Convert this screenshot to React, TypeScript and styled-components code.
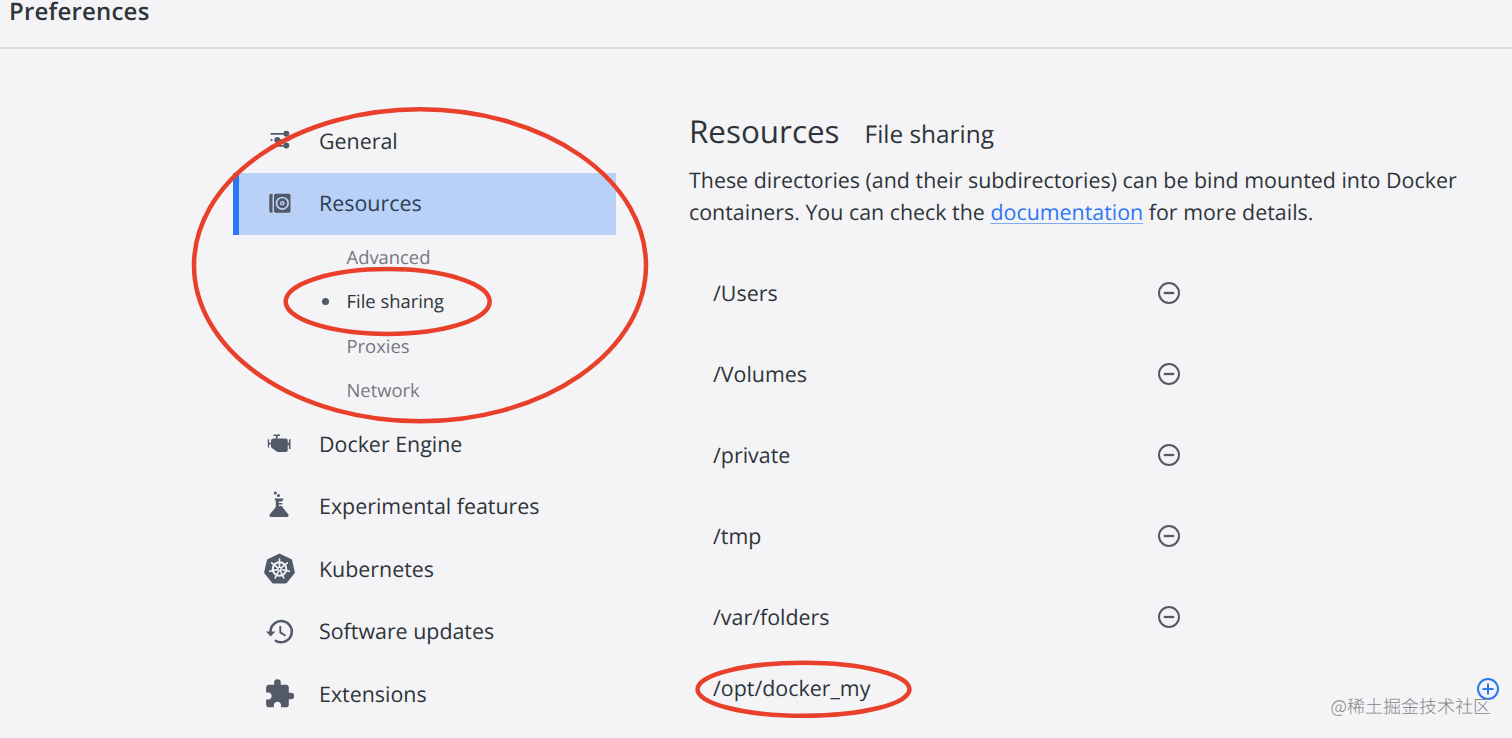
import React from 'react';
import styled, { createGlobalStyle } from 'styled-components';

const INK = '#2e3439';
const ICON = '#525969';
const BLUE = '#2c77f5';

const GlobalStyle = createGlobalStyle`
  * { box-sizing: border-box; }
  body {
    margin: 0;
    background: #f4f4f7;
    color: ${INK};
    font-family: 'Open Sans', 'Noto Sans CJK SC', sans-serif;
    text-rendering: geometricPrecision;
    overflow: hidden;
  }
`;

const Window = styled.div`
  position: relative;
  display: flex;
  flex-direction: column;
  width: 1512px;
  height: 738px;
  overflow: hidden;
`;

const Header = styled.header`
  flex: none;
  height: 49px;
  border-bottom: 2px solid #dddee1;
`;

const Title = styled.h1`
  margin: 0;
  padding-left: 9px;
  font-size: 24px;
  line-height: 23px;
  font-weight: 600;
  letter-spacing: 0.2px;
`;

const Body = styled.main`
  flex: 1;
  display: flex;
  padding: 61px 0 0 233px;
`;

const Nav = styled.nav`
  flex: none;
  width: 382.5px;
`;

const NavItem = styled.div<{ $active?: boolean }>`
  display: flex;
  align-items: center;
  height: 62.5px;
  padding-left: ${(p) => (p.$active ? 25 : 31)}px;
  border-left: ${(p) => (p.$active ? `6px solid ${BLUE}` : 'none')};
  background: ${(p) => (p.$active ? '#b9d0f7' : 'transparent')};
  color: ${(p) => (p.$active ? '#2b3f55' : INK)};
`;

const NavIcon = styled.svg`
  flex: none;
  width: 32px;
  height: 32px;
  margin-right: 23px;
  color: ${ICON};
`;

const Label = styled.span`
  margin-top: 0.6px;
  font-size: 21.4px;
  line-height: 32px;
  white-space: nowrap;
`;

const SubList = styled.ul`
  margin: 0;
  padding: 0;
  list-style: none;
`;

const SubItem = styled.li<{ $active?: boolean }>`
  display: flex;
  align-items: center;
  height: 44.5px;
  padding-left: 89px;
  font-size: 18.4px;
  color: ${(p) => (p.$active ? INK : '#74787e')};
`;

const Dot = styled.i<{ $visible?: boolean }>`
  width: 7px;
  height: 7px;
  margin-right: 17.5px;
  border-radius: 50%;
  background: ${(p) => (p.$visible ? ICON : 'transparent')};
`;

const Content = styled.section`
  flex: 1;
  padding-left: 73.5px;
`;

const Heading = styled.h2`
  display: flex;
  align-items: baseline;
  gap: 25px;
  height: 44px;
  margin: 0;
  font-size: 31.4px;
  line-height: 43px;
  font-weight: 400;
`;

const SubHeading = styled.span`
  font-size: 24.4px;
`;

const Description = styled.p`
  margin: 11px 0 0;
  font-size: 21.4px;
  line-height: 32px;
  white-space: nowrap;
`;

const DocLink = styled.a`
  color: ${BLUE};
  text-decoration: underline 1px #7fabf5;
  text-decoration-skip-ink: none;
  text-underline-offset: 3px;
`;

const Directories = styled.div`
  padding: 24px 0 0 24px;
`;

const Directory = styled.div`
  display: flex;
  align-items: center;
  justify-content: space-between;
  width: 467.5px;
  height: 81.1px;
`;

const NewDirectory = styled.div`
  display: flex;
  align-items: center;
  justify-content: space-between;
  width: 787px;
  height: 62px;
`;

const Path = styled.span`
  font-size: 21.4px;
  line-height: 32px;
`;

const RoundButton = styled.svg<{ $primary?: boolean }>`
  width: 24px;
  height: 24px;
  color: ${(p) => (p.$primary ? BLUE : ICON)};
`;

const Marks = styled.svg`
  position: absolute;
  inset: 0;
  width: 1512px;
  height: 738px;
  pointer-events: none;
`;

const Watermark = styled.span`
  position: absolute;
  right: 21px;
  bottom: 19px;
  font-family: 'Noto Sans CJK SC', sans-serif;
  font-size: 18px;
  font-weight: 300;
  line-height: 26px;
  color: #858587;
  white-space: nowrap;
`;

const GeneralIcon = () => (
  <NavIcon viewBox="0 0 32 32" fill="currentColor">
    <path d="M6.500 8h13v1.800h-13zM6.500 14.200h2v1.800h-2zM11 14.200h15v1.800h-15zM6.500 20h13v1.800h-13z" />
    <circle cx="22.300" cy="8.700" r="3" />
    <circle cx="13.300" cy="15" r="3" />
    <circle cx="22.300" cy="20.600" r="3" />
  </NavIcon>
);

const ResourcesIcon = () => (
  <NavIcon viewBox="0 0 32 32" fill="currentColor">
    <path d="M7.300 5.800h1.200v19H7.300a2 2 0 0 1-2-2v-15a2 2 0 0 1 2-2z" />
    <rect x="10" y="5.800" width="16.500" height="19" rx="1.800" />
    <circle cx="18.300" cy="15.300" r="5.800" fill="none" stroke="#b9d0f7" strokeWidth="1.700" />
    <circle cx="18.300" cy="15.300" r="2.300" fill="#b9d0f7" />
    <circle cx="18.300" cy="15.300" r="0.900" />
  </NavIcon>
);

const EngineIcon = () => (
  <NavIcon viewBox="0 0 32 32" fill="currentColor">
    <path d="M9.500 6.400h6.500v1.500h-2.400v2.500h8.300a1.800 1.800 0 0 1 1.800 1.800v2.500h1.200v-3.400h1.600v9.600h-1.600v-3.700h-1.200v5.100a1.800 1.800 0 0 1-1.800 1.800h-6.200c-1.600 0-3-.5-4.400-1.600L7.800 20c-.6-.4-.8-1-.8-1.800v-1.700H5.200v3H3.800V11.300h1.400v3.500H7v-2a2.400 2.400 0 0 1 2.400-2.400h2.500V7.900H9.500z" />
  </NavIcon>
);

const FlaskIcon = () => (
  <NavIcon viewBox="0 0 32 32" fill="currentColor">
    <circle cx="11.300" cy="1.900" r="1.500" />
    <circle cx="14.500" cy="4.600" r="1.500" />
    <path d="M10.800 7.600h8.500v1.700h-1v1.200h-3.500V12h3.500v1.500h-3.500V15h3.500v1l5.900 7.200c1 1.400.2 2.800-1.300 2.800H7.200c-1.500 0-2.300-1.400-1.300-2.800l5.900-7.200V9.300h-1z" />
  </NavIcon>
);

const spokes = Array.from({ length: 7 }, (_, i) => (i * 360) / 7);

const KubernetesIcon = () => (
  <NavIcon viewBox="0 0 32 32" fill="currentColor">
    <path
      d="M15.500 1.800 26.900 7.300 29.700 19.500 21.800 29.300H9.200L1.300 19.500 4.100 7.300z"
      stroke="currentColor"
      strokeWidth="2.400"
      strokeLinejoin="round"
    />
    <g fill="none" stroke="#f4f4f7" strokeLinecap="round">
      <circle cx="15.500" cy="16" r="6.800" strokeWidth="2" />
      {spokes.map((a) => (
        <path key={a} d="M15.500 14V6" strokeWidth="1.600" transform={`rotate(${a} 15.500 16)`} />
      ))}
    </g>
    <circle cx="15.500" cy="16" r="2.300" fill="#f4f4f7" />
    <circle cx="15.500" cy="16" r="0.900" />
  </NavIcon>
);

const HistoryIcon = () => (
  <NavIcon viewBox="0 0 32 32" fill="none" stroke="currentColor" strokeWidth="2.500">
    <path d="M6.600 16.200A10.600 10.600 0 1 1 10.900 24.200" />
    <path d="M2 15.500h9.400L6.700 20.500z" fill="currentColor" stroke="none" />
    <path d="M16.300 10v6.400l5.300 3.300" strokeWidth="1.900" />
  </NavIcon>
);

const PuzzleIcon = () => (
  <NavIcon viewBox="0.400 0 24 24" fill="currentColor">
    <path d="M20.500 11H19V7c0-1.100-.9-2-2-2h-4V3.500a2.500 2.500 0 0 0-5 0V5H4c-1.100 0-2 .9-2 2v3.800h1.500c1.500 0 2.700 1.200 2.700 2.700s-1.200 2.700-2.700 2.700H2V20c0 1.100.9 2 2 2h3.800v-1.500c0-1.500 1.200-2.700 2.700-2.700s2.700 1.200 2.700 2.700V22H17c1.100 0 2-.9 2-2v-4h1.500a2.500 2.500 0 0 0 0-5z" />
  </NavIcon>
);

const RemoveButton = () => (
  <RoundButton viewBox="0 1 24 24" fill="none" stroke="currentColor" strokeWidth="2">
    <circle cx="12" cy="12" r="10" />
    <path d="M6.800 12h10.400" strokeWidth="2.300" />
  </RoundButton>
);

const AddButton = () => (
  <RoundButton $primary viewBox="0 0 24 24" fill="none" stroke="currentColor" strokeWidth="2">
    <circle cx="12" cy="12" r="10" />
    <path d="M6.500 12h11M12 6.500v11" />
  </RoundButton>
);

const subItems = ['Advanced', 'File sharing', 'Proxies', 'Network'];
const directories = ['/Users', '/Volumes', '/private', '/tmp', '/var/folders'];

export default function App() {
  return (
    <Window>
      <GlobalStyle />
      <Header>
        <Title>Preferences</Title>
      </Header>
      <Body>
        <Nav>
          <NavItem><GeneralIcon /><Label>General</Label></NavItem>
          <NavItem $active><ResourcesIcon /><Label>Resources</Label></NavItem>
          <SubList>
            {subItems.map((name) => (
              <SubItem key={name} $active={name === 'File sharing'}>
                <Dot $visible={name === 'File sharing'} />
                {name}
              </SubItem>
            ))}
          </SubList>
          <NavItem><EngineIcon /><Label>Docker Engine</Label></NavItem>
          <NavItem><FlaskIcon /><Label>Experimental features</Label></NavItem>
          <NavItem><KubernetesIcon /><Label>Kubernetes</Label></NavItem>
          <NavItem><HistoryIcon /><Label>Software updates</Label></NavItem>
          <NavItem><PuzzleIcon /><Label>Extensions</Label></NavItem>
        </Nav>
        <Content>
          <Heading>Resources<SubHeading>File sharing</SubHeading></Heading>
          <Description>
            These directories (and their subdirectories) can be bind mounted into Docker
            <br />
            containers. You can check the <DocLink>documentation</DocLink> for more details.
          </Description>
          <Directories>
            {directories.map((path) => (
              <Directory key={path}>
                <Path>{path}</Path>
                <RemoveButton />
              </Directory>
            ))}
            <NewDirectory>
              <Path>/opt/docker_my</Path>
              <AddButton />
            </NewDirectory>
          </Directories>
        </Content>
      </Body>
      <Marks viewBox="0 0 1512 738" fill="none" stroke="#e8402a" strokeWidth="4.500">
        <ellipse cx="420" cy="265.300" rx="226" ry="156" />
        <ellipse cx="387.700" cy="301.500" rx="102" ry="32.500" />
        <ellipse cx="803.500" cy="689.300" rx="106" ry="26.500" />
      </Marks>
      <Watermark>@稀土掘金技术社区</Watermark>
    </Window>
  );
}
